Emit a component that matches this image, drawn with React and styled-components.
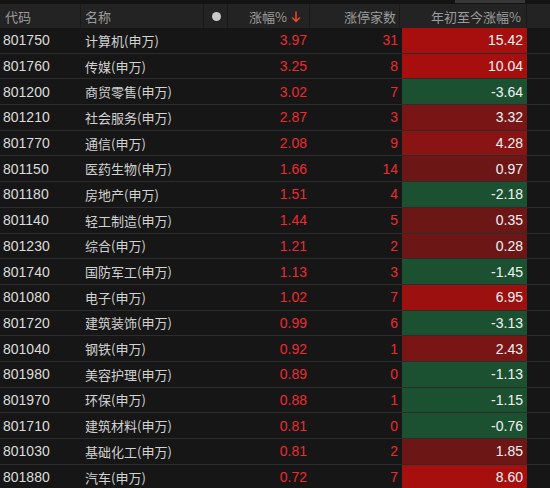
import React from "react";
import styled, { createGlobalStyle } from "styled-components";

const Global = createGlobalStyle`
  html, body { margin: 0; padding: 0; background: #161616; }
  body { width: 550px; height: 488px; overflow: hidden; }
`;

const COLS = "81px 123px 24px 82px 90px 127px 23px";

const Page = styled.div`
  width: 550px;
  height: 488px;
  overflow: hidden;
  background: #161616;
  display: flex;
  flex-direction: column;
`;

const TopStrip = styled.div`
  height: 4px;
  flex: none;
  background: #131313;
  display: flex;
  justify-content: flex-end;
  padding-right: 25px;
`;

const Thumb = styled.div`
  width: 70px;
  height: 3px;
  background: #373737;
`;

const HeaderRow = styled.div`
  display: grid;
  grid-template-columns: ${COLS};
  height: 24px;
  flex: none;
  background: #232323;
`;

const HeadCell = styled.div`
  display: flex;
  align-items: center;
  justify-content: ${(p) => (p.$right ? "flex-end" : p.$center ? "center" : "flex-start")};
  padding: ${(p) => p.$pad || "0"};
  border-right: ${(p) => (p.$noBorder ? "none" : "1px solid #191919")};
  font-family: "Noto Sans CJK SC", "Liberation Sans", sans-serif;
  font-size: 13px;
  color: #9c9c9c;
  gap: 4px;
  overflow: hidden;
  white-space: nowrap;
`;

const Dot = styled.span`
  width: 9px;
  height: 9px;
  border-radius: 50%;
  background: #c9c9c9;
  margin-left: 1px;
`;

const Row = styled.div`
  display: grid;
  grid-template-columns: ${COLS};
  height: 25.7px;
  flex: none;
  box-sizing: border-box;
  border-bottom: 1px solid #2c2c2c;
  background: #161616;
`;

const Cell = styled.div`
  display: flex;
  align-items: center;
  justify-content: ${(p) => (p.$right ? "flex-end" : "flex-start")};
  padding: ${(p) => p.$pad || "0"};
  white-space: nowrap;
  overflow: hidden;
`;

const Code = styled(Cell)`
  font-family: "Liberation Sans", "Noto Sans", sans-serif;
  font-size: 14px;
  color: #dcdcdc;
`;

const Name = styled(Cell)`
  font-family: "Noto Sans CJK SC", "Liberation Sans", sans-serif;
  font-size: 13px;
  color: #d2d2d2;
`;

const Num = styled(Cell)`
  font-family: "Liberation Sans", "Noto Sans", sans-serif;
  font-size: 14px;
  color: #ec2b30;
`;

const YearCell = styled(Cell)`
  margin-left: 2px;
  background: ${(p) => p.$bg};
  font-family: "Liberation Sans", "Noto Sans", sans-serif;
  font-size: 14px;
  color: #f2f2f2;
`;

const rows = [
  ["801750", "计算机(申万)", "3.97", "31", "15.42"],
  ["801760", "传媒(申万)", "3.25", "8", "10.04"],
  ["801200", "商贸零售(申万)", "3.02", "7", "-3.64"],
  ["801210", "社会服务(申万)", "2.87", "3", "3.32"],
  ["801770", "通信(申万)", "2.08", "9", "4.28"],
  ["801150", "医药生物(申万)", "1.66", "14", "0.97"],
  ["801180", "房地产(申万)", "1.51", "4", "-2.18"],
  ["801140", "轻工制造(申万)", "1.44", "5", "0.35"],
  ["801230", "综合(申万)", "1.21", "2", "0.28"],
  ["801740", "国防军工(申万)", "1.13", "3", "-1.45"],
  ["801080", "电子(申万)", "1.02", "7", "6.95"],
  ["801720", "建筑装饰(申万)", "0.99", "6", "-3.13"],
  ["801040", "钢铁(申万)", "0.92", "1", "2.43"],
  ["801980", "美容护理(申万)", "0.89", "0", "-1.13"],
  ["801970", "环保(申万)", "0.88", "1", "-1.15"],
  ["801710", "建筑材料(申万)", "0.81", "0", "-0.76"],
  ["801030", "基础化工(申万)", "0.81", "2", "1.85"],
  ["801880", "汽车(申万)", "0.72", "7", "8.60"],
];

function yearBg(v) {
  const n = parseFloat(v);
  if (n < 0) return "#1b5131";
  if (n >= 8) return "#a70e0e";
  if (n >= 6) return "#9c1010";
  if (n >= 4) return "#8a1313";
  if (n >= 2.4) return "#7a1515";
  return "#6d1616";
}

const DownArrow = () => (
  <svg width="10" height="13" viewBox="0 0 10 13" fill="none">
    <path d="M5 1.5V11.5M1.2 7.6L5 11.5L8.8 7.6" stroke="#ef4a24" strokeWidth="1.5" />
  </svg>
);

export default function App() {
  return (
    <>
      <Global />
      <Page>
        <TopStrip>
          <Thumb />
        </TopStrip>
        <HeaderRow>
          <HeadCell $pad="0 0 0 5px">代码</HeadCell>
          <HeadCell $pad="0 0 0 4px">名称</HeadCell>
          <HeadCell $center>
            <Dot />
          </HeadCell>
          <HeadCell $right $pad="0 8px 0 0">
            涨幅%
            <DownArrow />
          </HeadCell>
          <HeadCell $right $pad="0 3px 0 0">涨停家数</HeadCell>
          <HeadCell $right $pad="0 5px 0 0">年初至今涨幅%</HeadCell>
          <HeadCell $noBorder />
        </HeaderRow>
        {rows.map(([code, name, chg, lim, ytd]) => (
          <Row key={code}>
            <Code $pad="0 0 0 3px">{code}</Code>
            <Name $pad="0 0 0 4px">{name}</Name>
            <Cell />
            <Num $right $pad="0 3px 0 0">{chg}</Num>
            <Num $right $pad="0 2px 0 0">{lim}</Num>
            <YearCell $right $pad="0 4px 0 0" $bg={yearBg(ytd)}>
              {ytd}
            </YearCell>
            <Cell />
          </Row>
        ))}
      </Page>
    </>
  );
}
